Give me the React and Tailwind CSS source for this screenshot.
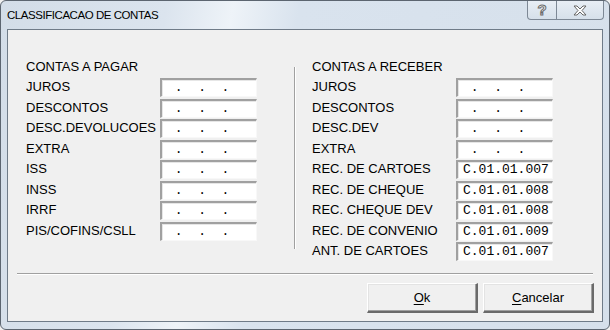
import React from 'react';

const pagar = ['JUROS', 'DESCONTOS', 'DESC.DEVOLUCOES', 'EXTRA', 'ISS', 'INSS', 'IRRF', 'PIS/COFINS/CSLL'];

const receber = [
  { label: 'JUROS', value: '' },
  { label: 'DESCONTOS', value: '' },
  { label: 'DESC.DEV', value: '' },
  { label: 'EXTRA', value: '' },
  { label: 'REC. DE CARTOES', value: 'C.01.01.007' },
  { label: 'REC. DE CHEQUE', value: 'C.01.01.008' },
  { label: 'REC. CHEQUE DEV', value: 'C.01.01.008' },
  { label: 'REC. DE CONVENIO', value: 'C.01.01.009' },
  { label: 'ANT. DE CARTOES', value: 'C.01.01.007' },
];

function MaskInput({ value }) {
  return (
    <div className="w-[97px] h-[19px] bg-white border-t-2 border-l-2 border-t-[#a0a0a0] border-l-[#a0a0a0] border-b border-r border-b-[#f8f8f8] border-r-[#f8f8f8] shadow-[inset_1px_1px_0_#e6e6e6] font-['Liberation_Mono',monospace] text-[13px] leading-[16px] pl-[5px] whitespace-pre text-black">
      {value || ' .  .  .'}
    </div>
  );
}

function Row({ label, value, labelW }) {
  return (
    <div className="flex h-[20.5px] items-start">
      <div className={`${labelW} pt-[1px] leading-[15px]`}>{label}</div>
      <MaskInput value={value} />
    </div>
  );
}

function WinButton({ children }) {
  return (
    <button className="w-[111px] h-[30px] bg-[#f0f0f0] border-t border-l border-t-white border-l-white border-b-2 border-r-2 border-b-[#6a6a6a] border-r-[#6a6a6a] shadow-[inset_-1px_-1px_0_#a0a0a0,inset_1px_1px_0_#e3e3e3] text-[13px] text-black">
      {children}
    </button>
  );
}

export default function App() {
  return (
    <div className="w-[610px] h-[330px] bg-[#f0f0f0] font-['Liberation_Sans',Arial,sans-serif]">
      <div className="w-[610px] h-[330px] flex flex-col rounded-[6px] border border-[#5c6570] bg-[linear-gradient(100deg,#d3dde8_0%,#dbe4ee_25%,#eef3f8_35%,#d9e3ee_45%,#d6e0eb_100%)]">
        {/* title bar */}
        <div className="h-[28px] flex items-start">
          <div className="pl-[6px] pt-[7px] text-[11.5px] tracking-[-0.45px] text-black leading-[14px]">CLASSIFICACAO DE CONTAS</div>
          <div className="ml-auto mr-[5px] flex">
            <div className="w-[30px] h-[19px] flex items-center justify-center border border-t-0 border-[#7d8895] rounded-bl-[4px] bg-[linear-gradient(#e8eef5,#d6e0ea)] text-[15px] font-bold text-white [-webkit-text-stroke:1px_#6a6a6a]">
              ?
            </div>
            <div className="w-[47px] h-[19px] flex items-center justify-center border border-t-0 border-l-0 border-[#7d8895] rounded-br-[4px] bg-[linear-gradient(#e8eef5,#d6e0ea)]">
              <svg width="14" height="11" viewBox="0 0 14 11">
                <path d="M1 1 L4 1 L7 4 L10 1 L13 1 L9 5.5 L13 10 L10 10 L7 7 L4 10 L1 10 L5 5.5 Z" fill="#fff" stroke="#666" strokeWidth="1" strokeLinejoin="round" />
              </svg>
            </div>
          </div>
        </div>

        {/* client area */}
        <div className="mx-[6px] h-[293px] bg-[#f0f0f0] border border-[#6f7b88] flex flex-col text-[13px] text-black">
          <div className="flex pt-[28px] pl-[18px] h-[243px]">
            <div className="w-[231px] flex flex-col">
              <div className="h-[20px] leading-[15px] pt-[1px]">CONTAS A PAGAR</div>
              {pagar.map((l) => (
                <Row key={l} label={l} labelW="w-[134px]" />
              ))}
            </div>
            <div className="ml-[37px] mt-[9px] w-[2px] h-[182px] border-l border-r border-l-[#a0a0a0] border-r-white" />
            <div className="ml-[16px] w-[241px] flex flex-col">
              <div className="h-[20px] leading-[15px] pt-[1px]">CONTAS A RECEBER</div>
              {receber.map((r, i) => (
                <Row key={i} label={r.label} value={r.value} labelW="w-[144px]" />
              ))}
            </div>
          </div>
          <div className="mx-[9px] h-[2px] border-t border-b border-t-[#a0a0a0] border-b-white" />
          <div className="flex justify-end gap-[5px] pr-[8px] pt-[8px]">
            <WinButton><span className="underline underline-offset-2">O</span>k</WinButton>
            <WinButton><span className="underline underline-offset-2">C</span>ancelar</WinButton>
          </div>
        </div>
      </div>
    </div>
  );
}
